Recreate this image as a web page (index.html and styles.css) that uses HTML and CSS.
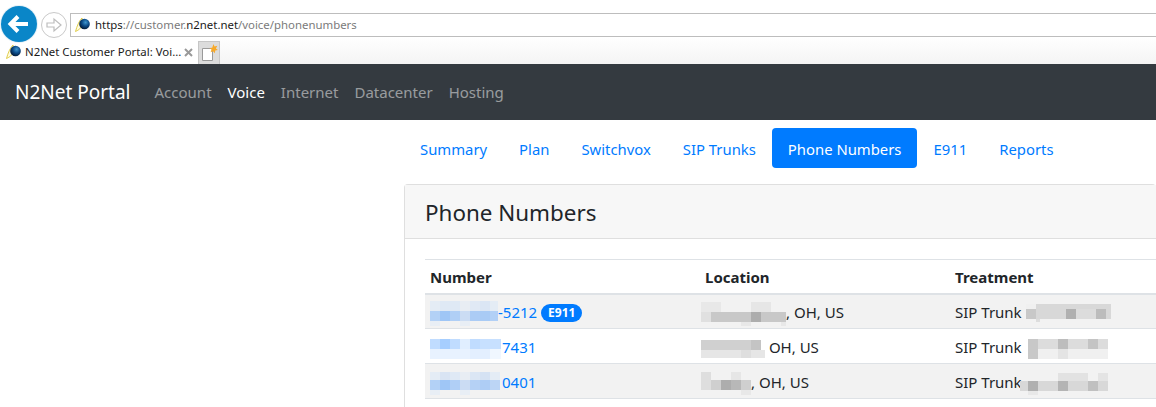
FILE: index.html
```html
<!DOCTYPE html>
<html lang="en">
<head>
<meta charset="utf-8">
<title>N2Net Customer Portal: Voice</title>
<link rel="stylesheet" href="styles.css">
</head>
<body>
<svg class="defs" width="0" height="0" aria-hidden="true">
  <defs>
    <radialGradient id="globe" cx="0.6" cy="0.35" r="0.7">
      <stop offset="0" stop-color="#3f97cf"/>
      <stop offset="0.5" stop-color="#0b4a86"/>
      <stop offset="1" stop-color="#03142b"/>
    </radialGradient>
    <symbol id="fav" viewBox="0 0 16 16">
      <path d="M0.5 14.500 C2 9 4 4 7 1 L7 9 C6 11 4 13 0.500 14.500Z" fill="#fffbe0" stroke="#dcc83c" stroke-width="0.9"/>
      <circle cx="9.500" cy="7" r="5.300" fill="url(#globe)"/>
    </symbol>
  </defs>
</svg>
<header class="browser">
  <div class="addr-row">
    <div class="back">
      <svg width="36" height="36" viewBox="0 0 36 36"><path d="M27 18H10M17 10.500 9.500 18 17 25.500" fill="none" stroke="#fff" stroke-width="4"/></svg>
    </div>
    <div class="forward">
      <svg width="24" height="24" viewBox="0 0 24 24"><path d="M5 10h7V6l7 6-7 6v-4H5z" fill="none" stroke="#bdbdbd" stroke-width="1.2"/></svg>
    </div>
    <div class="addr">
      <svg class="fav" width="16" height="16"><use href="#fav"/></svg>
      <span class="url"><span class="url-dark">https</span>://customer.<span class="url-dark">n2net.net</span>/voice/phonenumbers</span>
    </div>
  </div>
  <div class="tab-row">
    <div class="tab">
      <svg class="fav" width="16" height="16"><use href="#fav"/></svg>
      <span class="tab-title">N2Net Customer Portal: Voi...</span>
      <svg class="tab-x" width="9" height="9" viewBox="0 0 9 9"><path d="M1 1 8 8M8 1 1 8" stroke="#999" stroke-width="2"/></svg>
    </div>
    <div class="new-tab">
      <svg width="20" height="20" viewBox="0 0 20 20">
        <path d="M3.500 5.500h10v12h-10z" fill="#fff" stroke="#9a9a9a"/>
        <path d="M14.500 1l1 2.600 2.800-.8-1.400 2.600 2 1.600-2.700.4-.3 2.800-1.900-2-2.400 1 .9-2.600-2-1.700 2.700-.2z" fill="#f7a929"/>
      </svg>
    </div>
  </div>
</header>

<nav class="navbar">
  <a class="brand">N2Net Portal</a>
  <ul class="nav-links">
    <li class="nav-link">Account</li>
    <li class="nav-link active">Voice</li>
    <li class="nav-link">Internet</li>
    <li class="nav-link">Datacenter</li>
    <li class="nav-link">Hosting</li>
  </ul>
</nav>

<main class="main">
  <ul class="pills">
    <li class="pill">Summary</li>
    <li class="pill">Plan</li>
    <li class="pill">Switchvox</li>
    <li class="pill">SIP Trunks</li>
    <li class="pill active">Phone Numbers</li>
    <li class="pill">E911</li>
    <li class="pill">Reports</li>
  </ul>

  <section class="card">
    <div class="card-header"><h1 class="card-title">Phone Numbers</h1></div>
    <div class="card-body">
      <table class="numbers">
        <thead>
          <tr><th class="c1">Number</th><th class="c2">Location</th><th class="c3">Treatment</th></tr>
        </thead>
        <tbody>
          <tr class="odd">
            <td><a class="num">
              <svg class="blur" width="68" height="26" viewBox="0 0 68 26" shape-rendering="crispEdges">
                <rect width="10" height="10" fill="#e4ecf5"/><rect x="10" width="10" height="10" fill="#dfe9f5"/><rect x="20" width="10" height="10" fill="#dfe9f5"/><rect x="30" width="10" height="10" fill="#e8edf3"/><rect x="40" width="10" height="10" fill="#e0e9f5"/><rect x="50" width="10" height="10" fill="#dbe6f4"/><rect x="60" width="8" height="10" fill="#e4ecf5"/>
                <rect y="10" width="10" height="10" fill="#b3d1f6"/><rect x="10" y="10" width="10" height="10" fill="#9fc6f6"/><rect x="20" y="10" width="10" height="10" fill="#b0cff6"/><rect x="30" y="10" width="10" height="10" fill="#cbdcf3"/><rect x="40" y="10" width="10" height="10" fill="#acccf5"/><rect x="50" y="10" width="10" height="10" fill="#a9cbf5"/><rect x="60" y="10" width="8" height="10" fill="#b2d0f6"/>
                <rect y="20" width="10" height="5" fill="#e8eef5"/><rect x="30" y="20" width="10" height="5" fill="#e8eef5"/>
              </svg>-5212</a> <span class="badge">E911</span></td>
            <td><svg class="blur loc1" width="85" height="24" viewBox="0 0 85 24" shape-rendering="crispEdges">
                <rect width="20" height="10" fill="#e8e8e8"/><rect x="50" width="20" height="10" fill="#e6e6e6"/>
                <rect y="10" x="10" width="75" height="10" fill="#c8c8c8"/><rect y="10" x="50" width="10" height="10" fill="#adadad"/><rect y="10" width="10" height="10" fill="#e0e0e0"/>
                <rect y="20" x="40" width="10" height="4" fill="#e8e8e8"/><rect y="20" x="80" width="5" height="4" fill="#e8e8e8"/>
              </svg>, OH, US</td>
            <td>SIP Trunk <svg class="blur" width="85" height="20" viewBox="0 0 85 20" shape-rendering="crispEdges">
                <rect width="85" height="15" fill="#d8d8d8"/><rect y="5" width="10" height="10" fill="#c8c8c8"/><rect x="40" y="5" width="10" height="10" fill="#b0b0b0"/><rect x="70" y="5" width="10" height="10" fill="#bcbcbc"/><rect x="50" y="5" width="20" height="10" fill="#dcdcdc"/><rect y="0" width="10" height="5" fill="#f0f0f0"/><rect y="15" x="10" width="4" height="3" fill="#ddd"/>
              </svg></td>
          </tr>
          <tr>
            <td><a class="num">
              <svg class="blur" width="72" height="20" viewBox="0 0 72 20" shape-rendering="crispEdges">
                <rect width="10" height="10" fill="#c0dcff"/><rect x="10" width="10" height="10" fill="#a6ceff"/><rect x="20" width="10" height="10" fill="#c0dcff"/><rect x="30" width="10" height="10" fill="#e0eeff"/><rect x="40" width="10" height="10" fill="#c0dcff"/><rect x="50" width="21" height="10" fill="#c7e0ff"/>
                <rect y="10" width="40" height="10" fill="#e8f2ff"/><rect x="40" y="10" width="20" height="10" fill="#e3efff"/><rect x="60" y="10" width="11" height="10" fill="#f0f7ff"/>
              </svg>7431</a></td>
            <td><svg class="blur loc2" width="64" height="18" viewBox="0 0 64 18" shape-rendering="crispEdges">
                <rect width="50" height="10" fill="#d0d0d0"/><rect x="50" width="10" height="10" fill="#c4c4c4"/>
                <rect y="10" width="64" height="8" fill="#e6e6e6"/><rect x="40" y="10" width="10" height="8" fill="#dedede"/>
              </svg> OH, US</td>
            <td>SIP Trunk<svg class="blur t2" width="88" height="20" viewBox="0 0 88 20" shape-rendering="crispEdges">
                <rect x="8" width="80" height="10" fill="#dcdcdc"/><rect x="8" width="10" height="20" fill="#c8c8c8"/><rect x="38" width="10" height="10" fill="#bdbdbd"/><rect x="68" width="10" height="10" fill="#c4c4c4"/><rect x="18" y="10" width="70" height="10" fill="#f0f0f0"/><rect x="38" y="10" width="10" height="10" fill="#e4e4e4"/>
              </svg></td>
          </tr>
          <tr class="odd">
            <td><a class="num">
              <svg class="blur" width="72" height="23" viewBox="0 0 72 23" shape-rendering="crispEdges">
                <rect width="10" height="8" fill="#e4ecf5"/><rect x="10" width="10" height="8" fill="#d9e4f3"/><rect x="20" width="10" height="8" fill="#dfe9f5"/><rect x="30" width="10" height="8" fill="#e8edf3"/><rect x="40" width="10" height="8" fill="#dbe6f4"/><rect x="50" width="10" height="8" fill="#d5e2f3"/><rect x="60" width="10" height="8" fill="#e4ecf5"/>
                <rect y="8" width="10" height="10" fill="#b3d1f6"/><rect x="10" y="8" width="10" height="10" fill="#9fc6f6"/><rect x="20" y="8" width="10" height="10" fill="#b0cff6"/><rect x="30" y="8" width="10" height="10" fill="#cbdcf3"/><rect x="40" y="8" width="10" height="10" fill="#b5d1f5"/><rect x="50" y="8" width="10" height="10" fill="#aecdf5"/><rect x="60" y="8" width="10" height="10" fill="#bcd5f5"/>
                <rect y="18" width="10" height="5" fill="#e8eef5"/><rect x="30" y="18" width="10" height="5" fill="#e8eef5"/>
              </svg>0401</a></td>
            <td><svg class="blur loc3" width="50" height="23" viewBox="0 0 50 23" shape-rendering="crispEdges">
                <rect width="10" height="18" fill="#dedede"/><rect x="10" y="8" width="40" height="10" fill="#cfcfcf"/><rect x="20" y="8" width="10" height="10" fill="#adadad"/><rect x="30" y="8" width="10" height="10" fill="#b8b8b8"/><rect x="30" width="10" height="8" fill="#e6e6e6"/><rect x="40" y="18" width="10" height="5" fill="#e8e8e8"/>
              </svg>, OH, US</td>
            <td>SIP Trunk<svg class="blur t2" width="88" height="22" viewBox="0 0 88 22" shape-rendering="crispEdges">
                <rect x="38" width="30" height="8" fill="#e2e2e2"/><rect x="78" width="10" height="8" fill="#e4e4e4"/><rect y="8" width="88" height="10" fill="#d8d8d8"/><rect x="8" y="8" width="10" height="10" fill="#b0b0b0"/><rect x="38" y="8" width="10" height="10" fill="#b4b4b4"/><rect x="68" y="8" width="10" height="10" fill="#c0c0c0"/><rect x="8" y="18" width="10" height="4" fill="#e8e8e8"/>
              </svg></td>
          </tr>
        </tbody>
      </table>
    </div>
  </section>
</main>
</body>
</html>
```
FILE: styles.css
```css
* { box-sizing: border-box; }
html, body { margin: 0; padding: 0; height: 407px; overflow: hidden; background: #fff; }
body { font-family: "Noto Sans", "Open Sans", sans-serif; font-size: 15px; line-height: 24px; color: #212529; }
ul { list-style: none; margin: 0; padding: 0; }
.defs { position: absolute; }

.browser { height: 64px; position: relative; background: #fff; }
.addr-row { height: 37px; display: flex; align-items: flex-end; padding-left: 1px; }
.back {
  width: 36px; height: 36px; border-radius: 50%; background: #0a86c8; flex: none;
  margin-bottom: -5px; position: relative; z-index: 2; box-shadow: 0 0 0 1px #e6f1f7;
}
.back svg, .forward svg { display: block; }
.forward {
  width: 26px; height: 26px; border-radius: 50%; border: 1px solid #c9c9c9; flex: none;
  margin-left: 4px; margin-bottom: -1px; display: flex; align-items: center; justify-content: center;
}
.addr {
  margin-left: 3px; flex: 1; height: 24px; border: 1px solid #bdbdbd; border-right: none;
  display: flex; align-items: center; padding-left: 4px; gap: 4px;
}
.url { font-size: 11.4px; color: #7b7b7b; }
.url-dark { color: #1a1a1a; }
.fav { flex: none; display: block; }
.tab-row { height: 27px; display: flex; align-items: flex-end; background: linear-gradient(#fff, #f4f4f4); }
.tab { width: 198px; height: 24px; display: flex; align-items: center; padding-left: 6px; background: #fff; position: relative; }
.tab-title { font-size: 11.4px; color: #1a1a1a; margin-left: 3px; white-space: nowrap; }
.tab-x { position: absolute; left: 184px; top: 8px; }
.new-tab { width: 22px; height: 23px; background: #dcdcdc; border: 1px solid #c6c6c6; border-bottom: none; display: flex; align-items: center; justify-content: center; }

.navbar { height: 56px; background: #343a40; display: flex; align-items: center; padding-left: 15px; }
.brand { font-size: 19px; color: #fff; margin-right: 16px; white-space: nowrap; }
.nav-links { display: flex; }
.nav-link { padding: 0 8px; color: rgba(255,255,255,.5); white-space: nowrap; }
.nav-link.active { color: #fff; }

.main { margin-left: 404px; padding-top: 8px; }
.pills { display: flex; height: 40px; margin-bottom: 16px; font-size: 14.85px; }
.pill { padding: 9px 16px 7px; color: #007bff; white-space: nowrap; border-radius: 4px; }
.pill.active { background: #007bff; color: #fff; }

.card { border: 1px solid #dfdfdf; border-radius: 4px; border-right: none; }
.card-header { height: 54px; background: #f7f7f7; border-bottom: 1px solid #dfdfdf; padding: 13px 20px 11px; }
.card-title { margin: 0; font-size: 22.4px; font-weight: 400; line-height: 29px; }
.card-body { padding: 20px 0 20px 20px; }

.numbers { border-collapse: collapse; table-layout: fixed; width: 100%; line-height: 22px; }
.c1 { width: 275px; }
.c2 { width: 250px; }
.numbers th { text-align: left; font-weight: 700; padding: 6px 5px 4px; height: 34px; border-top: 1px solid #dee2e6; border-bottom: 2px solid #dee2e6; }
.numbers td { padding: 6px 5px 4px; height: 35px; border-bottom: 1px solid #dee2e6; white-space: nowrap; }
.odd { background: #f2f2f2; }
.num { color: #007bff; }
.blur { vertical-align: middle; margin: -8px 0; }
.loc1, .loc2, .loc3 { margin-left: -4px; }
.t2 { margin-left: -2px; }
.badge {
  display: inline-block; background: #007bff; color: #fff; font-size: 12px; font-weight: 700;
  line-height: 12px; padding: 3px 7px; border-radius: 10px; vertical-align: 1px;
}
```
